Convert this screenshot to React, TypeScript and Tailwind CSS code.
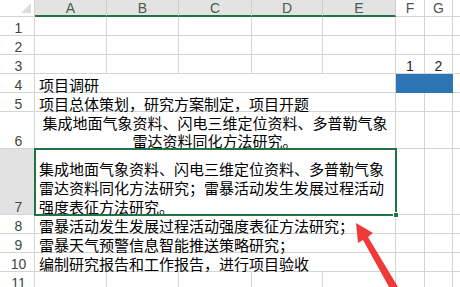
import React from "react";

const GRID = "border-[#d4d4d4]";
const CJK = { fontFamily: '"Noto Sans CJK SC", "Noto Sans", sans-serif' } as const;
const LAT = { fontFamily: '"Liberation Sans", Arial, sans-serif' } as const;

function RowHead({ n, h, sel }: { n: number; h: string; sel?: boolean }) {
  return (
    <div
      className={`w-[35px] shrink-0 border-r border-b ${GRID} ${h} ${sel ? "bg-[#e2e2e2]" : "bg-white"} flex items-end justify-center pl-[3px] text-[14px] leading-[14px] text-[#444]`}
      style={LAT}
    >
      {n}
    </div>
  );
}

function Tail({ h, f, g, blue }: { h: string; f?: string; g?: string; blue?: boolean }) {
  return (
    <>
      <div
        className={`w-[29px] shrink-0 border-r border-b ${blue ? "border-[#2e75b6] bg-[#2e75b6]" : GRID} ${h} flex items-end justify-center text-[14px] leading-[14px] text-[#222]`}
        style={LAT}
      >
        {f}
      </div>
      <div
        className={`w-[28px] shrink-0 border-r border-b ${blue ? "bg-[#2e75b6] border-[#2e75b6]" : GRID} ${h} flex items-end justify-center text-[14px] leading-[14px] text-[#222]`}
        style={LAT}
      >
        {g}
      </div>
      <div className={`flex-1 border-b ${GRID} ${h}`} />
    </>
  );
}

function EmptyRow({ n, f, g }: { n: number; f?: string; g?: string }) {
  const h = "h-[19px]";
  return (
    <div className="flex">
      <RowHead n={n} h={h} />
      {[72, 72, 73, 71, 73].map((w, i) => (
        <div key={i} className={`shrink-0 border-r border-b ${GRID} ${h}`} style={{ width: w }} />
      ))}
      <Tail h={h} f={f} g={g} />
    </div>
  );
}

function MergedRow({
  n,
  h,
  children,
  center,
  blue,
  sel,
  lead = "leading-[19px]",
}: {
  n: number;
  h: string;
  children: React.ReactNode;
  center?: boolean;
  blue?: boolean;
  sel?: boolean;
  lead?: string;
}) {
  return (
    <div className="flex">
      <RowHead n={n} h={h} sel={sel} />
      <div
        className={`w-[361px] shrink-0 border-r border-b ${GRID} ${h} flex flex-col justify-end px-[4px] text-[15px] ${lead} text-black whitespace-nowrap ${center ? "items-center text-center" : "items-start"}`}
        style={CJK}
      >
        <div className="translate-y-[2px]">{children}</div>
      </div>
      <Tail h={h} blue={blue} />
    </div>
  );
}

export default function App() {
  const cols = [
    { l: "A", w: 72 },
    { l: "B", w: 72 },
    { l: "C", w: 73 },
    { l: "D", w: 71 },
    { l: "E", w: 73 },
  ];
  return (
    <div className="relative w-[460px] h-[287px] overflow-hidden bg-white">
      {/* column headers */}
      <div className="flex h-[17px]">
        <div className={`relative w-[35px] shrink-0 border-r border-b ${GRID} bg-white`}>
          <div className="absolute right-[3px] bottom-[3px] w-0 h-0 border-l-[10px] border-l-transparent border-b-[10px] border-b-[#dcdcdc]" />
        </div>
        {cols.map((c) => (
          <div
            key={c.l}
            className="shrink-0 border-r border-r-[#cfcfcf] border-b-2 border-b-[#217346] bg-[#e3e3e3] flex items-center justify-center pt-[1px] text-[14px] leading-[15px] text-[#4a5a50]"
            style={{ ...LAT, width: c.w }}
          >
            {c.l}
          </div>
        ))}
        <div className={`w-[29px] shrink-0 border-r border-b ${GRID} bg-white flex items-center justify-center pt-[1px] text-[14px] leading-[15px] text-[#555]`} style={LAT}>
          F
        </div>
        <div className={`w-[28px] shrink-0 border-r border-b ${GRID} bg-white flex items-center justify-center pt-[1px] text-[14px] leading-[15px] text-[#555]`} style={LAT}>
          G
        </div>
        <div className={`flex-1 border-b ${GRID} bg-white`} />
      </div>

      <EmptyRow n={1} />
      <EmptyRow n={2} />
      <EmptyRow n={3} f="1" g="2" />
      <MergedRow n={4} h="h-[19px]" blue>
        项目调研
      </MergedRow>
      <MergedRow n={5} h="h-[19px]">
        项目总体策划，研究方案制定，项目开题
      </MergedRow>
      <MergedRow n={6} h="h-[37px]" center lead="leading-[18px]">
        集成地面气象资料、闪电三维定位资料、多普勒气象
        <br />
        雷达资料同化方法研究。
      </MergedRow>
      <MergedRow n={7} h="h-[66px]" sel>
        集成地面气象资料、闪电三维定位资料、多普勒气象
        <br />
        雷达资料同化方法研究；雷暴活动发生发展过程活动
        <br />
        强度表征方法研究。
      </MergedRow>
      <MergedRow n={8} h="h-[19px]">
        雷暴活动发生发展过程活动强度表征方法研究；
      </MergedRow>
      <MergedRow n={9} h="h-[19px]">
        雷暴天气预警信息智能推送策略研究；
      </MergedRow>
      <MergedRow n={10} h="h-[19px]">
        编制研究报告和工作报告，进行项目验收
      </MergedRow>
      <EmptyRow n={11} />

      {/* selection border */}
      <div className="absolute left-[34px] top-[148px] w-[363px] h-[68px] border-2 border-[#217346] pointer-events-none" />
      <div className="absolute left-[393px] top-[212px] w-[6px] h-[6px] bg-[#217346] border border-white pointer-events-none" />

      {/* red arrow */}
      <svg className="absolute left-0 top-0 pointer-events-none" width="460" height="287" viewBox="0 0 460 287">
        <polygon
          points="356,223 373,233 368,237 398,287 389,287 363,240 358,243"
          fill="#f03a3a"
        />
      </svg>
    </div>
  );
}
